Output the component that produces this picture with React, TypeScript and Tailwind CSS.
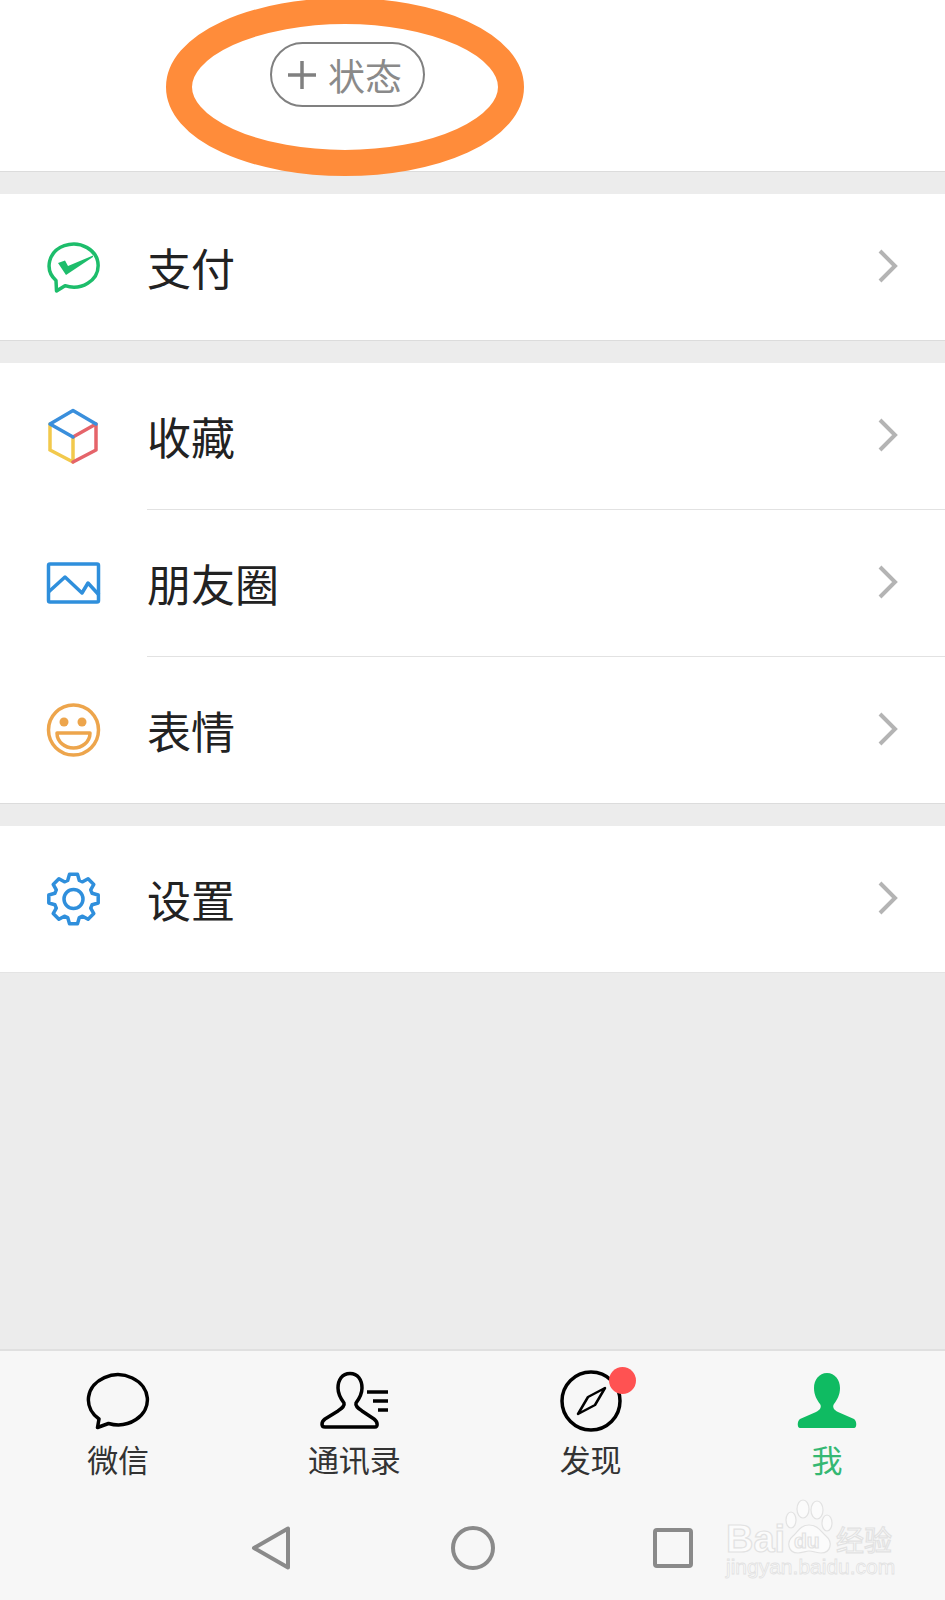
const gearPath = (() => {
  const cx = 27.5, cy = 28, pts: string[] = [];
  for (let i = 0; i < 8; i++) {
    const a = (i * Math.PI) / 4 - Math.PI / 2;
    const at = (r: number, d: number) => `${(cx + r * Math.cos(a + d)).toFixed(1)} ${(cy + r * Math.sin(a + d)).toFixed(1)}`;
    pts.push(`${i === 0 ? "M" : "L"}${at(19.5, -0.3)}`, `L${at(25, -0.16)}`, `L${at(25, 0.16)}`, `L${at(19.5, 0.3)}`);
  }
  return pts.join(" ") + "Z";
})();

const Pay = () => (
  <svg width="56" height="56" viewBox="0 0 56 56" fill="none">
    <path d="M19 46.7A24.5 21.5 0 1 0 10 41.5L10.5 52Z" stroke="#1dbd6b" strokeWidth="3.5" strokeLinejoin="round" />
    <path d="M12 24L19 21.5L22 27L47 16.5L47 18L20 36Z" fill="#1dbd6b" />
  </svg>
);
const Cube = () => (
  <svg width="56" height="56" viewBox="0 0 56 56" fill="none" strokeWidth="3.5" strokeLinecap="round" strokeLinejoin="round">
    <path d="M4 42V16M4 42L27 54V29" stroke="#f2c94c" />
    <path d="M27 54L50 42V16L27 29" stroke="#e5646a" />
    <path d="M27 29L4 16L27 2.5L50 16" stroke="#3a8fdc" />
  </svg>
);
const Picture = () => (
  <svg width="56" height="56" viewBox="0 0 56 56" fill="none" stroke="#2f8fdc" strokeWidth="3.5" strokeLinejoin="round">
    <rect x="2.5" y="9" width="50" height="38" rx="1.5" />
    <path d="M2.5 37L19 22L36 38L42 28L53 40" />
  </svg>
);
const Smile = () => (
  <svg width="56" height="56" viewBox="0 0 56 56" fill="none" stroke="#eda54c" strokeWidth="3.5" strokeLinejoin="round">
    <circle cx="27.5" cy="28" r="25" />
    <circle cx="18" cy="20" r="4.5" fill="#eda54c" stroke="none" />
    <circle cx="36" cy="20" r="4.5" fill="#eda54c" stroke="none" />
    <path d="M11 31H44C44 40 36 46 27.5 46C19 46 11 40 11 31Z" />
  </svg>
);
const Gear = () => (
  <svg width="56" height="56" viewBox="0 0 56 56" fill="none" stroke="#2f8fdc" strokeWidth="3.5" strokeLinejoin="round">
    <path d={gearPath} />
    <circle cx="27.5" cy="28" r="9.5" />
  </svg>
);
const Chevron = () => (
  <svg width="20" height="34" viewBox="0 0 20 34" fill="none" className="ml-auto mr-[47px] -mt-[2px]">
    <path d="M2 2L17 17L2 32" stroke="#b4b4b4" strokeWidth="4" />
  </svg>
);

const Row = ({ icon, label }: { icon: React.ReactNode; label: string }) => (
  <div className="flex h-[146px] items-center">
    <div className="w-[147px] pl-[46px]">{icon}</div>
    <span className="text-[44px] leading-none text-[#222]">{label}</span>
    <Chevron />
  </div>
);
const Divider = () => <div className="ml-[147px] h-px bg-[#e2e2e2]" />;
const Gap = () => <div className="h-[23px] border-t border-[#dcdcdc] bg-[#ececec]" />;

const Tab = ({ icon, label, active }: { icon: React.ReactNode; label: string; active?: boolean }) => (
  <div className="relative flex flex-col items-center">
    <div className="flex h-[62px] items-center">{icon}</div>
    <span className={`mt-[5px] h-[44px] text-[31px] leading-[44px] ${active ? "text-[#35b873]" : "text-[#333]"}`}>{label}</span>
  </div>
);

export default function App() {
  return (
    <div className="relative flex h-[1600px] w-[945px] flex-col overflow-hidden bg-[#ececec] font-['Noto_Sans_CJK_SC','Noto_Sans',sans-serif]">
      <div className="h-[171px] bg-white pl-[270px] pt-[42px]">
        <div className="flex h-[65px] w-[155px] items-center rounded-full border-2 border-[#808080] pl-[15px]">
          <svg width="30" height="30" viewBox="0 0 30 30">
            <path d="M1 15H29M15 1V29" stroke="#808080" strokeWidth="3.5" />
          </svg>
          <span className="ml-[11px] mt-[2px] text-[37px] leading-none text-[#8a8a8a]">状态</span>
        </div>
      </div>
      <svg width="372" height="190" viewBox="0 0 372 190" fill="none" className="absolute left-[159px] top-[-8px]">
        <ellipse cx="186" cy="95" rx="166" ry="76" stroke="#ff8c3a" strokeWidth="26" />
      </svg>
      <Gap />
      <div className="bg-white">
        <Row icon={<Pay />} label="支付" />
      </div>
      <Gap />
      <div className="bg-white">
        <Row icon={<Cube />} label="收藏" />
        <Divider />
        <Row icon={<Picture />} label="朋友圈" />
        <Divider />
        <Row icon={<Smile />} label="表情" />
      </div>
      <Gap />
      <div className="bg-white">
        <Row icon={<Gear />} label="设置" />
      </div>
      <div className="flex-1 border-t border-[#e4e4e4]" />
      <div className="h-[251px] border-t-2 border-[#e0e0e0] bg-[#f7f7f7] pt-[19px]">
        <div className="grid grid-cols-4">
          <Tab
            label="微信"
            icon={
              <svg width="64" height="62" viewBox="0 0 64 62" fill="none">
                <path d="M22.5 53.5A29.5 25 0 1 0 13 49L11.5 57.5Z" stroke="#000" strokeWidth="3.5" strokeLinejoin="round" />
              </svg>
            }
          />
          <Tab
            label="通讯录"
            icon={
              <svg width="72" height="62" viewBox="0 0 72 62" fill="none" stroke="#000" strokeWidth="3.5">
                <path strokeLinejoin="round" d="M32 3.5C24 3.5 20 10 20 18C20 25 23 29 26 33C27 36 24 38 20 41L7 49C3 52 3 57 7 57H57C60 57 60 52 56 49L44 41C40 38 37 36 38 33C41 29 44 25 44 18C44 10 40 3.5 32 3.5Z" />
                <path d="M49 22H70M55 31H70M60 40H70" />
              </svg>
            }
          />
          <Tab
            label="发现"
            icon={
              <div className="relative">
                <svg width="64" height="62" viewBox="0 0 64 62" fill="none" stroke="#000" strokeWidth="3.5" strokeLinejoin="round">
                  <circle cx="32" cy="31" r="29" />
                  <path strokeWidth="2.5" d="M46 18L36 35L19 44L29 27Z" />
                </svg>
                <div className="absolute left-[50px] top-[-3px] h-[27px] w-[27px] rounded-full bg-[#ff5252]" />
              </div>
            }
          />
          <Tab
            active
            label="我"
            icon={
              <svg width="64" height="62" viewBox="0 0 64 62">
                <path fill="#0fbb62" d="M32 3C24 3 19 10 19 18C19 25 22 30 25 34C27 37 25 40 21 42L5 49C2 51 2 58 5 58H59C62 58 62 51 59 49L43 42C39 40 37 37 39 34C42 30 45 25 45 18C45 10 40 3 32 3Z" />
              </svg>
            }
          />
        </div>
        <div className="flex items-center pl-[251px] pt-[45px]">
          <svg width="40" height="44" viewBox="0 0 40 44" fill="none">
            <path d="M37 2.5V41.5L3 22Z" stroke="#8a8a8a" strokeWidth="4" strokeLinejoin="round" />
          </svg>
          <svg width="44" height="44" viewBox="0 0 44 44" fill="none" className="ml-[160px]">
            <circle cx="22" cy="22" r="20" stroke="#8a8a8a" strokeWidth="4" />
          </svg>
          <svg width="40" height="40" viewBox="0 0 40 40" fill="none" className="ml-[158px]">
            <rect x="2" y="2" width="36" height="36" rx="2" stroke="#8a8a8a" strokeWidth="4" />
          </svg>
        </div>
      </div>
      <svg width="180" height="90" viewBox="0 0 180 90" className="absolute left-[722px] top-[1494px]" fill="#fbfbfb" stroke="#e2e2e2" strokeWidth="1.2">
        <ellipse cx="69" cy="26" rx="5" ry="8" />
        <ellipse cx="81" cy="15" rx="6" ry="9" />
        <ellipse cx="95" cy="16" rx="6" ry="9" />
        <ellipse cx="105" cy="29" rx="5" ry="8" />
        <path d="M87 31C78 31 76 38 71 42C64 48 66 59 76 59C80 59 84 57 87 57C91 57 95 59 99 59C109 59 111 48 104 42C99 38 96 31 87 31Z" />
        <text x="4" y="58" fontFamily="'Liberation Sans',sans-serif" fontWeight="700" fontSize="38">Bai</text>
        <text x="72" y="54" fontFamily="'Liberation Sans',sans-serif" fontWeight="700" fontSize="21">du</text>
        <text x="114" y="57" fontFamily="'Noto Sans CJK SC',sans-serif" fontSize="28">经验</text>
        <text x="4" y="80" fontFamily="'Liberation Sans',sans-serif" fontSize="21" strokeWidth="0.8">jingyan.baidu.com</text>
      </svg>
    </div>
  );
}
